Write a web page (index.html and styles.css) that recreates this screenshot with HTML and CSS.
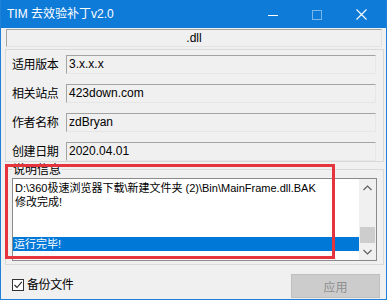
FILE: index.html
```html
<!DOCTYPE html>
<html>
<head>
<meta charset="utf-8">
<link rel="stylesheet" href="styles.css">
</head>
<body>
<div class="window">
  <div class="titlebar">
    <span class="title">TIM 去效验补丁v2.0</span>
    <div class="controls">
      <span class="ctl"><svg width="10" height="10" viewBox="0 0 10 10"><line x1="0" y1="5.5" x2="10" y2="5.5" stroke="#fff" stroke-width="1"/></svg></span>
      <span class="ctl dim"><svg width="10" height="10" viewBox="0 0 10 10"><rect x="0.5" y="0.5" width="9" height="9" fill="none" stroke="#fff" stroke-width="1"/></svg></span>
      <span class="ctl"><svg width="11" height="11" viewBox="0 0 11 11"><path d="M0.5 0.5 L10.5 10.5 M10.5 0.5 L0.5 10.5" stroke="#fff" stroke-width="1.1" fill="none"/></svg></span>
    </div>
  </div>
  <div class="client">
    <div class="pathbox">.dll</div>
    <div class="group info">
      <div class="row"><span class="label">适用版本</span><div class="field">3.x.x.x</div></div>
      <div class="row"><span class="label">相关站点</span><div class="field">423down.com</div></div>
      <div class="row"><span class="label">作者名称</span><div class="field">zdBryan</div></div>
      <div class="row"><span class="label">创建日期</span><div class="field">2020.04.01</div></div>
    </div>
    <fieldset class="log">
      <legend>说明信息</legend>
      <div class="listbox">
        <div class="lines">
          <div class="line">D:\360极速浏览器下载\新建文件夹 (2)\Bin\MainFrame.dll.BAK</div>
          <div class="line">修改完成!</div>
          <div class="line"></div>
          <div class="line"></div>
          <div class="line sel">运行完毕!</div>
        </div>
        <div class="scrollbar">
          <div class="arrow"><svg width="9" height="6" viewBox="0 0 9 6"><path d="M0.5 5 L4.5 1 L8.5 5" fill="none" stroke="#606060" stroke-width="1.2"/></svg></div>
          <div class="track"><div class="thumb"></div></div>
          <div class="arrow"><svg width="9" height="6" viewBox="0 0 9 6"><path d="M0.5 1 L4.5 5 L8.5 1" fill="none" stroke="#606060" stroke-width="1.2"/></svg></div>
        </div>
      </div>
    </fieldset>
    <div class="footer">
      <label class="check"><span class="box"><svg width="10" height="10" viewBox="0 0 10 10"><path d="M1.5 5 L4 7.5 L8.8 1.8" fill="none" stroke="#222" stroke-width="1.1"/></svg></span><span class="cktext">备份文件</span></label>
      <button class="apply" disabled>应用</button>
    </div>
  </div>
  <div class="annot"></div>
</div>
</body>
</html>
```

FILE: styles.css
```css
html, body {
  margin: 0;
  padding: 0;
  background: #ffffff;
}
body {
  font-family: "Liberation Sans", "Noto Sans CJK SC", sans-serif;
  font-size: 12px;
  color: #000;
}
.window {
  position: relative;
  width: 387px;
  height: 300px;
  box-sizing: border-box;
  border: 1px solid #1f80d6;
  background: #f0f0f0;
  display: flex;
  flex-direction: column;
}
.titlebar {
  height: 27px;
  margin-top: -1px;
  padding-top: 1px;
  background: #0f7bd8;
  color: #fff;
  display: flex;
  align-items: center;
  justify-content: space-between;
}
.title {
  padding-left: 6px;
  font-size: 12px;
  line-height: 14px;
  margin-top: -1px;
}
.controls {
  display: flex;
  padding-right: 3px;
  height: 27px;
}
.ctl {
  width: 44px;
  display: flex;
  align-items: center;
  justify-content: center;
}
.ctl.dim {
  opacity: 0.45;
}
.client {
  display: flex;
  flex-direction: column;
  flex: 1;
}
.pathbox {
  margin: 1px 4px 0 5px;
  height: 18px;
  box-sizing: border-box;
  border: 1px solid;
  border-color: #a3a3a3 #e3e3e3 #e3e3e3 #a3a3a3;
  text-align: center;
  line-height: 16px;
}
.group {
  border: 1px solid #d9d9d9;
}
.info {
  margin: 2px 2px 0 4px;
  padding: 5px 7px 0 6px;
  display: flex;
  flex-direction: column;
  gap: 10px;
}
.row {
  display: flex;
  align-items: center;
  height: 19px;
}
.label {
  width: 54px;
  line-height: 14px;
  letter-spacing: -0.4px;
}
.field {
  flex: 1;
  height: 19px;
  box-sizing: border-box;
  border: 1px solid;
  border-color: #a3a3a3 #e6e6e6 #e6e6e6 #a3a3a3;
  padding-left: 2px;
  line-height: 17px;
}
.log {
  margin: 0 2px 0 4px;
  padding: 2px 6px 3px 6px;
  border: 1px solid #d9d9d9;
  min-width: 0;
}
.log legend {
  padding: 0 1px;
  line-height: 14px;
  font-size: 12px;
  position: relative;
  top: 1px;
}
.listbox {
  height: 83px;
  box-sizing: border-box;
  border: 1px solid #8a8a8a;
  background: #fff;
  display: flex;
  font-size: 11px;
}
.lines {
  flex: 1;
  padding-top: 2px;
  overflow: hidden;
}
.line {
  height: 14px;
  line-height: 14px;
  padding-left: 2px;
  white-space: nowrap;
}
.line.sel {
  background: #0078d7;
  color: #fff;
  padding-left: 1px;
}
.scrollbar {
  width: 17px;
  background: #f0f0f0;
  display: flex;
  flex-direction: column;
}
.arrow {
  height: 17px;
  display: flex;
  align-items: center;
  justify-content: center;
}
.track {
  flex: 1;
  display: flex;
  flex-direction: column;
  justify-content: flex-end;
}
.thumb {
  height: 16px;
  margin: 0 1px;
  background: #cdcdcd;
}
.footer {
  flex: 1;
  display: flex;
  justify-content: space-between;
  align-items: flex-start;
  padding: 9px 6px 0 11px;
}
.check {
  display: flex;
  align-items: center;
  margin-top: 3px;
}
.box {
  width: 12px;
  height: 12px;
  box-sizing: border-box;
  border: 1px solid #333;
  background: #fff;
  display: flex;
  align-items: center;
  justify-content: center;
}
.cktext {
  margin-left: 3px;
  line-height: 14px;
  margin-top: 1px;
  letter-spacing: -0.4px;
}
.apply {
  width: 89px;
  height: 24px;
  box-sizing: border-box;
  border: 1px solid #bfbfbf;
  background: #cccccc;
  color: #8f8f8f;
  font-family: "Liberation Sans", "Noto Sans CJK SC", sans-serif;
  font-size: 12px;
  padding: 0;
}
.annot {
  position: absolute;
  left: 4px;
  top: 163px;
  width: 330px;
  height: 95px;
  box-sizing: border-box;
  border: 3px solid #e5343d;
}
```
